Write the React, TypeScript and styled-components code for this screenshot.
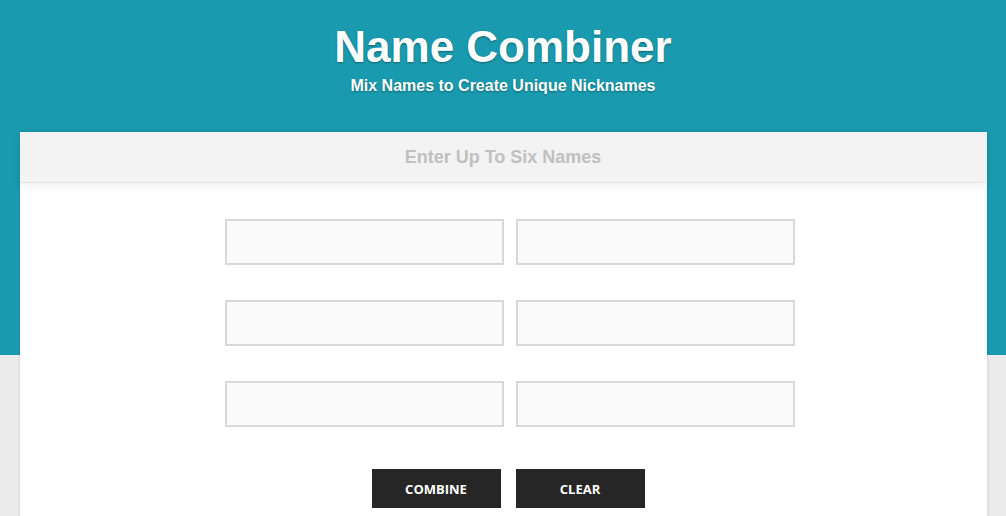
import * as React from 'react';
import styled, { createGlobalStyle } from 'styled-components';

const GlobalStyle = createGlobalStyle`
  html, body {
    margin: 0;
    padding: 0;
  }
  body {
    background: #ebebeb;
    font-family: "Liberation Sans", Arial, sans-serif;
  }
`;

const Page = styled.div`
  height: 516px;
  background: linear-gradient(#1a9aae 0, #1a9aae 355px, #ebebeb 355px);
  overflow: hidden;
`;

const Header = styled.header`
  text-align: center;
  color: #fff;
  padding-top: 25px;
  height: 132px;
  box-sizing: border-box;
`;

const Title = styled.h1`
  margin: 0;
  font-size: 44px;
  line-height: 44px;
  font-weight: 700;
  text-shadow: 0 1px 2px rgba(0, 0, 0, 0.35);
`;

const Subtitle = styled.p`
  margin: 8px 0 0;
  font-size: 16px;
  line-height: 18px;
  font-weight: 700;
  text-shadow: 0 1px 2px rgba(0, 0, 0, 0.35);
`;

const Card = styled.main`
  width: 967px;
  margin: 0 auto;
  background: #fff;
  min-height: 600px;
  box-shadow: 0 0 3px rgba(0, 0, 0, 0.15);
`;

const CardHead = styled.div`
  height: 50px;
  background: #f3f3f3;
  border-bottom: 1px solid #e3e3e3;
  box-shadow: 0 4px 8px rgba(0, 0, 0, 0.06);
  display: flex;
  align-items: center;
  justify-content: center;
  color: #c0c0c0;
  font-size: 18px;
  font-weight: 700;
`;

const FieldGrid = styled.div`
  display: grid;
  grid-template-columns: 279px 279px;
  column-gap: 12px;
  row-gap: 35px;
  margin: 36px 0 0 205px;
`;

const NameInput = styled.input`
  box-sizing: border-box;
  height: 46px;
  width: 100%;
  border: 2px solid #d8d8d8;
  background: #fafafa;
  padding: 0 12px;
  font-size: 15px;
  font-family: inherit;
  outline: none;
`;

const Actions = styled.div`
  display: flex;
  gap: 15px;
  margin: 42px 0 0 352px;
`;

const Button = styled.button`
  width: 129px;
  height: 39px;
  border: none;
  background: #262626;
  color: #fff;
  font-family: "Open Sans", sans-serif;
  font-size: 13px;
  font-weight: 700;
  cursor: pointer;
`;

const App = () => (
  <Page>
    <GlobalStyle />
    <Header>
      <Title>Name Combiner</Title>
      <Subtitle>Mix Names to Create Unique Nicknames</Subtitle>
    </Header>
    <Card>
      <CardHead>Enter Up To Six Names</CardHead>
      <FieldGrid>
        {[0, 1, 2, 3, 4, 5].map((i) => (
          <NameInput key={i} type="text" aria-label={`Name ${i + 1}`} />
        ))}
      </FieldGrid>
      <Actions>
        <Button>COMBINE</Button>
        <Button>CLEAR</Button>
      </Actions>
    </Card>
  </Page>
);

export default App;
